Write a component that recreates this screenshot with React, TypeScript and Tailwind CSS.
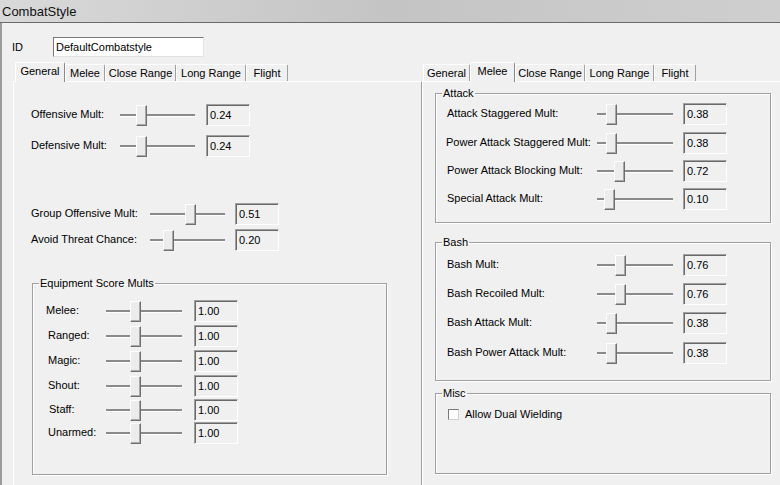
type SliderRow = {
  label: string;
  value: string;
  thumb: number;
  pl: string;
  mt: string;
};

const leftTabs = [
  { name: "General", w: "w-[50px]" },
  { name: "Melee", w: "w-[40px]" },
  { name: "Close Range", w: "w-[71px]" },
  { name: "Long Range", w: "w-[70px]" },
  { name: "Flight", w: "w-[42px]" },
];

const rightTabs = [
  { name: "General", w: "w-[47px]" },
  { name: "Melee", w: "w-[45px]" },
  { name: "Close Range", w: "w-[70px]" },
  { name: "Long Range", w: "w-[69px]" },
  { name: "Flight", w: "w-[42px]" },
];

const equipment: SliderRow[] = [
  { label: "Melee:", value: "1.00", thumb: 24, pl: "pl-[13px]", mt: "mt-[10px]" },
  { label: "Ranged:", value: "1.00", thumb: 24, pl: "pl-[15px]", mt: "mt-[3px]" },
  { label: "Magic:", value: "1.00", thumb: 24, pl: "pl-[15px]", mt: "mt-[3px]" },
  { label: "Shout:", value: "1.00", thumb: 24, pl: "pl-[15px]", mt: "mt-[3px]" },
  { label: "Staff:", value: "1.00", thumb: 24, pl: "pl-[16px]", mt: "mt-[2px]" },
  { label: "Unarmed:", value: "1.00", thumb: 24, pl: "pl-[15px]", mt: "mt-px" },
];

const attack: SliderRow[] = [
  { label: "Attack Staggered Mult:", value: "0.38", thumb: 9, pl: "pl-[11px]", mt: "mt-[3px]" },
  { label: "Power Attack Staggered Mult:", value: "0.38", thumb: 9, pl: "pl-[10px]", mt: "mt-[7px]" },
  { label: "Power Attack Blocking Mult:", value: "0.72", thumb: 17, pl: "pl-[11px]", mt: "mt-[6px]" },
  { label: "Special Attack Mult:", value: "0.10", thumb: 7, pl: "pl-[11px]", mt: "mt-[6px]" },
];

const bash: SliderRow[] = [
  { label: "Bash Mult:", value: "0.76", thumb: 18, pl: "pl-[11px]", mt: "mt-[5px]" },
  { label: "Bash Recoiled Mult:", value: "0.76", thumb: 18, pl: "pl-[11px]", mt: "mt-[7px]" },
  { label: "Bash Attack Mult:", value: "0.38", thumb: 9, pl: "pl-[11px]", mt: "mt-[7px]" },
  { label: "Bash Power Attack Mult:", value: "0.38", thumb: 9, pl: "pl-[11px]", mt: "mt-[8px]" },
];

function Slider({ w, thumb }: { w: string; thumb: number }) {
  return (
    <div className={`relative h-[22px] shrink-0 ${w}`}>
      <div className="absolute left-0 right-0 top-[10px] h-[3px] border-t-2 border-t-[#8a8a8a] border-b border-b-white" />
      <div
        className="absolute top-px h-[21px] w-[11px] bg-[#ececec] border border-t-white border-l-white border-r-[#6f6f6f] border-b-[#6f6f6f] shadow-[inset_-1px_-1px_0_#a8a8a8]"
        style={{ left: thumb }}
      />
    </div>
  );
}

function ValueBox({ value, ml }: { value: string; ml: string }) {
  return (
    <div
      className={`${ml} h-[22px] w-[44px] shrink-0 bg-[#f0f0f0] border border-t-[#a0a0a0] border-l-[#a0a0a0] border-r-white border-b-white shadow-[inset_1px_1px_0_#696969] pl-[3px] flex items-center`}
    >
      {value}
    </div>
  );
}

function Row({
  row,
  labelW,
  sliderW,
  boxMl,
}: {
  row: SliderRow;
  labelW: string;
  sliderW: string;
  boxMl: string;
}) {
  return (
    <div className={`flex items-center ${row.mt}`}>
      <div className={`${labelW} ${row.pl} mb-[2px] shrink-0 whitespace-nowrap`}>{row.label}</div>
      <Slider w={sliderW} thumb={row.thumb} />
      <ValueBox value={row.value} ml={boxMl} />
    </div>
  );
}

function GroupBox({
  title,
  className,
  children,
}: {
  title: string;
  className: string;
  children: React.ReactNode;
}) {
  return (
    <fieldset
      className={`border border-[#a0a0a0] shadow-[inset_1px_1px_0_#fff,1px_1px_0_#fff] ${className}`}
    >
      <legend className="ml-[6px] px-px leading-[13px]">{title}</legend>
      {children}
    </fieldset>
  );
}

function TabStrip({
  tabs,
  active,
  pl,
}: {
  tabs: { name: string; w: string }[];
  active: string;
  pl: string;
}) {
  return (
    <div className={`flex items-end h-[19px] ${pl}`}>
      {tabs.map((t) =>
        t.name === active ? (
          <div
            key={t.name}
            className={`${t.w} relative z-10 -mb-px h-[20px] bg-[#f0f0f0] border-t border-l border-r border-t-white border-l-white border-r-[#8a8a8a] rounded-t-[2px] flex justify-center pt-[2px] whitespace-nowrap`}
          >
            {t.name}
          </div>
        ) : (
          <div
            key={t.name}
            className={`${t.w} h-[17px] bg-[#f0f0f0] border-t border-l border-r border-t-white border-l-white border-r-[#a0a0a0] rounded-t-[2px] flex justify-center pt-[2px] whitespace-nowrap`}
          >
            {t.name}
          </div>
        )
      )}
    </div>
  );
}

export default function App() {
  return (
    <div className="w-[780px] h-[485px] overflow-hidden bg-[#f0f0f0] flex flex-col font-['Liberation_Sans',Arial,sans-serif] text-[11px] leading-[13px] text-black">
      {/* Title bar */}
      <div className="h-[23px] shrink-0 flex items-center pl-[2px] border-b border-[#6a6a6a] bg-gradient-to-r from-[#d9d9d9] via-[#c4c4c4] to-[#cfcfcf] text-[13px] text-[#111]">
        CombatStyle
      </div>

      {/* Body */}
      <div className="flex-1 flex flex-col border-l-2 border-[#9c9c9c] min-h-0">
        {/* ID row */}
        <div className="flex items-center h-[20px] mt-[14px] pl-[10px]">
          <span className="w-[41px]">ID</span>
          <div className="w-[151px] h-[20px] bg-white border border-t-[#7a7a7a] border-l-[#7a7a7a] border-r-[#e3e3e3] border-b-[#e3e3e3] pl-[2px] flex items-center">
            DefaultCombatstyle
          </div>
        </div>

        <div className="flex flex-1 mt-[5px] min-h-0">
          {/* Left tab control */}
          <div className="ml-[11px] w-[409px] shrink-0 flex flex-col">
            <TabStrip tabs={leftTabs} active="General" pl="pl-[2px]" />
            <div className="flex-1 border-t border-l border-r border-t-white border-l-white border-r-[#a0a0a0] pl-[17px] pt-[22px] flex flex-col">
              <Row
                row={{ label: "Offensive Mult:", value: "0.24", thumb: 16, pl: "pl-0", mt: "mt-0" }}
                labelW="w-[89px]"
                sliderW="w-[75px]"
                boxMl="ml-[11px]"
              />
              <Row
                row={{ label: "Defensive Mult:", value: "0.24", thumb: 16, pl: "pl-0", mt: "mt-[9px]" }}
                labelW="w-[89px]"
                sliderW="w-[75px]"
                boxMl="ml-[11px]"
              />
              <Row
                row={{ label: "Group Offensive Mult:", value: "0.51", thumb: 35, pl: "pl-0", mt: "mt-[46px]" }}
                labelW="w-[119px]"
                sliderW="w-[75px]"
                boxMl="ml-[10px]"
              />
              <Row
                row={{ label: "Avoid Threat Chance:", value: "0.20", thumb: 13, pl: "pl-0", mt: "mt-[4px]" }}
                labelW="w-[119px]"
                sliderW="w-[75px]"
                boxMl="ml-[10px]"
              />

              <GroupBox title="Equipment Score Mults" className="ml-px mt-[26px] w-[355px] h-[198px]">
                {equipment.map((r) => (
                  <Row key={r.label} row={r} labelW="w-[73px]" sliderW="w-[76px]" boxMl="ml-[12px]" />
                ))}
              </GroupBox>
            </div>
          </div>

          {/* Right tab control */}
          <div className="flex-1 min-w-0 flex flex-col">
            <TabStrip tabs={rightTabs} active="Melee" pl="pl-px" />
            <div className="flex-1 border-t border-l border-t-white border-l-white pl-[12px] pt-[5px] flex flex-col">
              <GroupBox title="Attack" className="w-[336px] h-[136px]">
                {attack.map((r) => (
                  <Row key={r.label} row={r} labelW="w-[161px]" sliderW="w-[76px]" boxMl="ml-[10px]" />
                ))}
              </GroupBox>

              <GroupBox title="Bash" className="mt-[13px] w-[336px] h-[145px]">
                {bash.map((r) => (
                  <Row key={r.label} row={r} labelW="w-[161px]" sliderW="w-[76px]" boxMl="ml-[10px]" />
                ))}
              </GroupBox>

              <GroupBox title="Misc" className="mt-[6px] w-[336px] h-[87px]">
                <div className="flex items-center mt-[8px] pl-[12px] h-[13px]">
                  <div className="w-[11px] h-[11px] bg-white border border-t-[#7a7a7a] border-l-[#7a7a7a] border-r-[#cfcfcf] border-b-[#cfcfcf]" />
                  <span className="ml-[6px]">Allow Dual Wielding</span>
                </div>
              </GroupBox>
            </div>
          </div>
        </div>
      </div>
    </div>
  );
}
